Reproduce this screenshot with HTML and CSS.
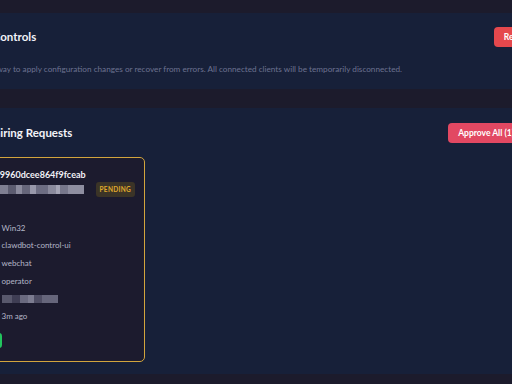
FILE: index.html
```html
<!DOCTYPE html>
<html lang="en">
	<head>
		<meta charset="UTF-8">
		<meta name="viewport" content="width=device-width, initial-scale=1.0" />
		<title>Gateway</title>
		<link rel="stylesheet" href="styles.css">
	</head>
	<body>
		<div class="page">
			<section class="panel panel-controls">
				<div class="panel-head">
					<h2>Gateway Controls</h2>
					<button class="btn btn-danger">Restart</button>
				</div>
				<p class="panel-desc">Reset the gateway to apply configuration changes or recover from errors. All connected clients will be temporarily disconnected.</p>
			</section>

			<section class="panel panel-pairing">
				<div class="panel-head">
					<h2>Remote Pairing Requests</h2>
					<button class="btn btn-rose">Approve All (1)</button>
				</div>
				<div class="request-grid">
					<div class="request-card">
						<div class="request-id">b7e21a04f9960dcee864f9fceab</div>
						<div class="request-sub">
							<span class="redacted redacted-name"></span>
							<span class="badge">PENDING</span>
						</div>
						<dl class="request-meta">
							<dt>Platform</dt><dd>Win32</dd>
							<dt>Client</dt><dd>clawdbot-control-ui</dd>
							<dt>Mode</dt><dd>webchat</dd>
							<dt>Role</dt><dd>operator</dd>
							<dt>IP</dt><dd><span class="redacted redacted-ip"></span></dd>
							<dt>Requested</dt><dd>3m ago</dd>
						</dl>
						<div class="request-actions">
							<button class="btn btn-approve">Approve</button>
						</div>
					</div>
				</div>
			</section>

			<section class="panel panel-next"></section>
		</div>
	</body>
</html>
```

FILE: styles.css
```css
html, body {
	margin: 0;
	height: 100%;
	overflow: hidden;
	background: #1c1b2c;
}

body {
	font-family: "Lato", "Noto Sans", sans-serif;
	color: #e9eaf2;
}

/* the view is scrolled sideways: panels run past both edges */
.page {
	margin-left: -70px;
	width: 609px;
	padding-top: 13px;
}

.panel {
	background: #172039;
	padding: 14px 15px 14px;
}

.panel-controls {
	margin-right: -17px;
}

.panel-head {
	display: flex;
	align-items: center;
	justify-content: space-between;
}

.panel-head h2 {
	margin: 0;
	font-size: 11.5px;
	font-weight: 700;
	line-height: 14px;
	color: #f2f3f8;
}

.panel-desc {
	margin: 16px 0 0;
	font-size: 8.2px;
	line-height: 12px;
	color: #6c7290;
}

.panel-pairing {
	margin-top: 19px;
	padding: 15px 15px 12px;
}

.panel-next {
	margin-top: 10px;
	height: 40px;
	border-top: 2px solid #44465c;
	background: #1a1d33;
}

.btn {
	border: 0;
	border-radius: 4px;
	height: 20px;
	padding: 0 10px;
	font-family: inherit;
	font-size: 8.5px;
	font-weight: 700;
	color: #fff;
}

.btn-danger {
	background: #e5484d;
}

.btn-rose {
	background: #e24862;
}

.btn-approve {
	background: #22c55e;
	height: 15px;
	padding: 0 8px;
	font-size: 8px;
	border-radius: 3px;
}

.request-grid {
	display: grid;
	grid-template-columns: 200px;
	margin-top: 14px;
}

.request-card {
	background: #1c1b2e;
	border: 1.5px solid #d2a53d;
	border-radius: 5px;
	padding: 10px 9px 13px 10px;
}

.request-id {
	font-size: 9px;
	font-weight: 700;
	line-height: 13px;
	color: #f1f1f6;
}

.request-sub {
	display: flex;
	align-items: center;
	justify-content: space-between;
	margin-top: 0.5px;
	height: 15px;
}

.badge {
	background: #3b3427;
	color: #e0a92c;
	font-size: 6.5px;
	font-weight: 700;
	letter-spacing: 0.3px;
	line-height: 15px;
	padding: 0 4px;
	border-radius: 3px;
}

.redacted {
	display: inline-block;
	height: 9px;
}

.redacted-name {
	width: 128px;
	background: linear-gradient(90deg,
		#3d3c52 0, #3d3c52 44px,
		#7f7f92 44px, #7f7f92 52px,
		#5c5c70 52px, #5c5c70 60px,
		#8b8b9d 60px, #8b8b9d 66px,
		#66667a 66px, #66667a 74px,
		#9898aa 74px, #9898aa 80px,
		#6d6d82 80px, #6d6d82 92px,
		#8a8a9c 92px, #8a8a9c 100px,
		#a5a5b5 100px, #a5a5b5 104px,
		#77778b 104px, #77778b 112px,
		#8e8ea0 112px, #8e8ea0 128px);
}

.redacted-ip {
	width: 56px;
	height: 8px;
	vertical-align: middle;
	background: linear-gradient(90deg,
		#58586c 0, #58586c 10px,
		#3f3e54 10px, #3f3e54 18px,
		#6a6a7f 18px, #6a6a7f 26px,
		#7c7c90 26px, #7c7c90 32px,
		#4f4e64 32px, #4f4e64 40px,
		#66667b 40px, #66667b 56px);
}

.request-meta {
	display: grid;
	grid-template-columns: 45.5px 1fr;
	grid-auto-rows: 17.6px;
	align-items: center;
	margin: 22.5px 0 0;
	font-size: 8px;
}

.request-meta dt {
	color: #6c7290;
}

.request-meta dd {
	margin: 0;
	color: #b4b7c8;
}

.request-actions {
	display: flex;
	gap: 6px;
	margin-top: 8px;
}
```
